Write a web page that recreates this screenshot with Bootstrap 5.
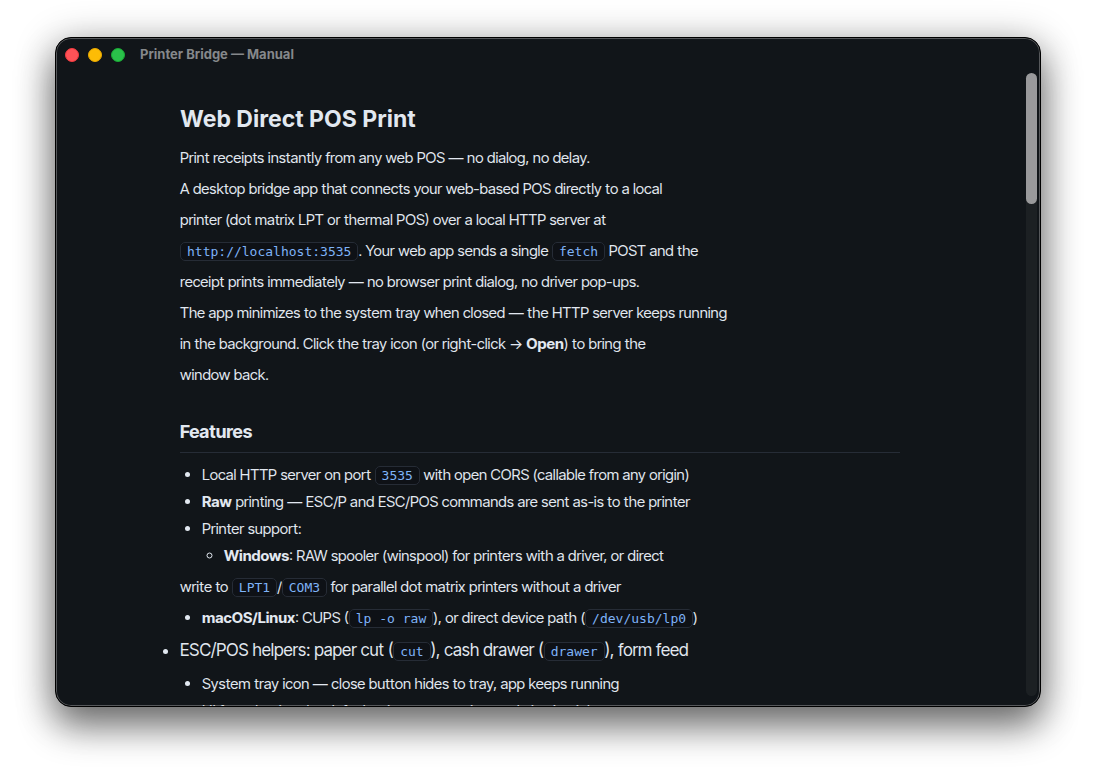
<!DOCTYPE html>
<html lang="en">
<head>
<meta charset="utf-8">
<meta name="viewport" content="width=device-width, initial-scale=1">
<title>Printer Bridge — Manual</title>
<link href="https://cdn.jsdelivr.net/npm/bootstrap@5.3.0/dist/css/bootstrap.min.css" rel="stylesheet">
<style>
  body { background: #fff; font-family: "Inter Tight", Inter, "Liberation Sans", sans-serif; padding: 37px 55px 73px; }
  .app-window {
    background: #111519; color: #e2e8f0; border: 1px solid #000; border-radius: 16px;
    box-shadow: inset 0 0 0 1px #56585b, 0 20px 36px rgba(0,0,0,.45), 0 6px 40px rgba(0,0,0,.32);
    padding: 1px 1px 0;
  }
  .title-bar { height: 31px; padding-left: 8px; font-family: Inter, "Liberation Sans", sans-serif; font-size: 13px; font-weight: 700; color: #85888b; }
  .lights { gap: 9px; margin-right: 15px; }
  .light { width: 14px; height: 14px; border-radius: 50%; border: 1px solid; padding: 0; }
  .light-close { background: #ff5257; border-color: #f23b40; }
  .light-min { background: #fdbc05; border-color: #e8a800; }
  .light-zoom { background: #2ac14a; border-color: #1aa935; }
  .manual { max-width: 720px; font-size: 15px; line-height: 23px; margin: 0 auto; padding-top: 33px; }
  .manual h1 { font-family: Inter, "Liberation Sans", sans-serif; font-size: 23px; line-height: 32px; font-weight: 700; margin: 0 0 11px; }
  .manual h2 { font-size: 18px; line-height: 25px; font-weight: 700; margin: 33px 0 10px; padding-bottom: 8px; border-bottom: 1px solid #262c36; }
  .manual p { margin: 0 0 8px; }
  .manual ul { margin: 0 0 8px; padding-left: 22px; }
  .manual ul ul { margin: 4px 0 0; }
  .manual li { margin-bottom: 4px; }
  .manual strong { font-weight: 700; }
  .manual code { font: 13px/18px "DejaVu Sans Mono", monospace; color: #7eb3f8; background: #0e1116; border: 1px solid #262c36; border-radius: 5px; padding: 1px 6px; }
  .manual .loose { padding-left: 0; font-size: 17px; line-height: 27px; }
  .scroll-lane { width: 16px; padding: 3px 2px 10px 3px; }
  .scroll-track { width: 11px; background: #1c2023; border-radius: 6px; }
  .scroll-thumb { height: 21%; background: #99999b; border-radius: 6px; }
</style>
</head>
<body class="vh-100 overflow-hidden d-flex">
<main class="app-window flex-fill d-flex flex-column overflow-hidden">
  <header class="title-bar d-flex align-items-center flex-shrink-0">
    <div class="lights d-flex">
      <button type="button" class="light light-close" aria-label="Close"></button>
      <button type="button" class="light light-min" aria-label="Minimize"></button>
      <button type="button" class="light light-zoom" aria-label="Zoom"></button>
    </div>
    <span>Printer Bridge — Manual</span>
  </header>
  <div class="d-flex flex-fill overflow-hidden">
    <div class="flex-fill overflow-hidden">
      <article class="manual">
        <h1>Web Direct POS Print</h1>
        <p>Print receipts instantly from any web POS — no dialog, no delay.</p>
        <p>A desktop bridge app that connects your web-based POS directly to a local</p>
        <p>printer (dot matrix LPT or thermal POS) over a local HTTP server at</p>
        <p><code>http://localhost:3535</code>. Your web app sends a single <code>fetch</code> POST and the</p>
        <p>receipt prints immediately — no browser print dialog, no driver pop-ups.</p>
        <p>The app minimizes to the system tray when closed — the HTTP server keeps running</p>
        <p>in the background. Click the tray icon (or right-click → <strong>Open</strong>) to bring the</p>
        <p>window back.</p>
        <h2>Features</h2>
        <ul>
          <li>Local HTTP server on port <code>3535</code> with open CORS (callable from any origin)</li>
          <li><strong>Raw</strong> printing — ESC/P and ESC/POS commands are sent as-is to the printer</li>
          <li>Printer support:
            <ul><li><strong>Windows</strong>: RAW spooler (winspool) for printers with a driver, or direct</li></ul>
          </li>
        </ul>
        <p>write to <code>LPT1</code>/<code>COM3</code> for parallel dot matrix printers without a driver</p>
        <ul><li><strong>macOS/Linux</strong>: CUPS (<code>lp -o raw</code>), or direct device path (<code>/dev/usb/lp0</code>)</li></ul>
        <ul class="loose"><li>ESC/POS helpers: paper cut (<code>cut</code>), cash drawer (<code>drawer</code>), form feed</li></ul>
        <ul>
          <li>System tray icon — close button hides to tray, app keeps running</li>
          <li>UI for selecting the default printer, paper size, and viewing jobs</li>
        </ul>
      </article>
    </div>
    <div class="scroll-lane d-flex flex-shrink-0" aria-hidden="true">
      <div class="scroll-track flex-shrink-0"><div class="scroll-thumb"></div></div>
    </div>
  </div>
</main>
<script src="https://cdn.jsdelivr.net/npm/bootstrap@5.3.0/dist/js/bootstrap.bundle.min.js"></script>
</body>
</html>
